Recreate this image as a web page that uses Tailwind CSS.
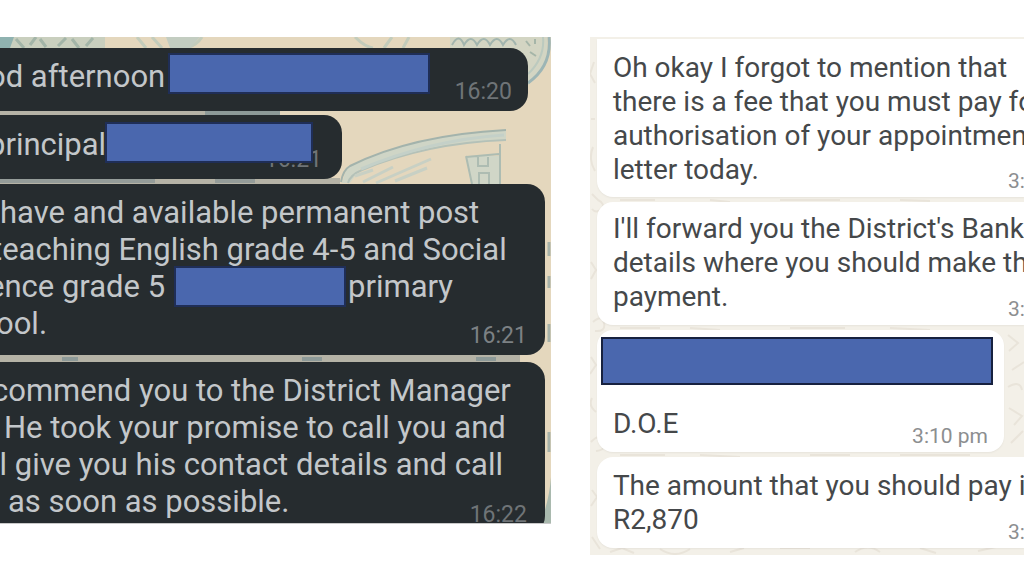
<!DOCTYPE html>
<html lang="en">
<head>
    <meta charset="UTF-8">
    <meta name="viewport" content="width=device-width, initial-scale=1.0">
    <title>Chat messages</title>
    <script src="https://cdn.jsdelivr.net/npm/@tailwindcss/browser@4"></script>
</head>
<body class="bg-white font-['Roboto',sans-serif] overflow-x-hidden">
    <main class="flex items-start pt-[37px] pb-5">
        <!-- Dark chat -->
        <section class="relative w-[53.8%] h-[487px] shrink-0 overflow-hidden bg-[#e4d7bd] border-b border-[#c9c9c9] text-[31px] leading-[37px] text-[#c3c7ca] whitespace-nowrap">
            <svg class="absolute top-0 left-0" width="551" height="487" viewBox="0 0 551 487" fill="none" aria-hidden="true">
                <!-- top strip -->
                <path d="M0 0H105V11H0Z" fill="#c9cfbe"/>
                <path d="M0 0H14L10 11H0Z" fill="#8fb2b0"/>
                <path d="M16 2l8 9M30 8l6-8M40 2l6 8M58 9l8-8M72 2l7 9M86 9l7-8" stroke="#a3b5a8" stroke-width="3"/>
                <path d="M137 0l9 11M152 0l10 11M202 0q-5 8-15 11M355 0q10 10 18 11M409 0l-6 11M392 0l-8 11" stroke="#c3ccbb" stroke-width="3"/>
                <path d="M166 0H200L190 11H170Z" fill="#c3cdc1"/>
                <!-- round doodle in the corner -->
                <path d="M450 0H547Q550 30 528 48L520 20L450 11Z" fill="#d3d5c3"/>
                <path d="M549 0Q552 29 528 46" stroke="#9db5b5" stroke-width="3"/>
                <path d="M543 0Q545 21 528 37" stroke="#bccabf" stroke-width="2"/>
                <path d="M452 8q7-13 12 0q7-12 13 0q7-12 13 0q7-12 13 0q7-12 13 0" stroke="#a2b5ae" stroke-width="2"/>
                <path d="M526 4l4 5m5-7v5m-5 8l6 4" stroke="#a5b5a8" stroke-width="2"/>
                <!-- boat doodle -->
                <path d="M342 146L347 130Q412 98 506 93V103Q426 107 360 132L350 146Z" fill="#cfd5c6"/>
                <path d="M341 145Q343 133 350 129Q412 98 506 93" stroke="#a3b3ac" stroke-width="2"/>
                <path d="M348 146Q350 138 362 133Q426 106 506 103" stroke="#b4c1b8" stroke-width="2"/>
                <path d="M361 132Q430 103 504 98" stroke="#c4d0c8" stroke-width="3"/>
                <path d="M363 145l30-15m-17 16l55-24m-36 22l32-13M355 139l18-6" stroke="#c8d0c4" stroke-width="3"/>
                <path d="M466 119h33v28h-28Z" fill="#d0d6c7"/>
                <path d="M466 119l6 28M466 120l33-3M500 107v40M478 120v9h10v-9M479 147v-11h10v11" stroke="#adbcb2" stroke-width="2"/>
                <!-- strips between the bubbles -->
                <path d="M0 74H205V79H0ZM0 141H340V147H0ZM0 318H520V325H0Z" fill="#b5b3a6"/>
                <path d="M205 76h75M62 322h16M302 322h20M476 322h20" stroke="#8d9a98" stroke-width="4"/>
                <path d="M0 144h155m60 0h40" stroke="#949c99" stroke-width="4"/>
                <path d="M549 205v14m0 20v12m0 36v18m0 90v20" stroke="#a5b1a8" stroke-width="3"/>
                <path d="M540 487Q549 465 551 440V487Z" fill="#a9b9ae"/>
            </svg>

            <div class="relative flex flex-col items-start pt-[11px]">
                <div class="relative self-stretch mr-[23px] h-[63px] pt-[10px] bg-[#262c2f] rounded-r-[18px]">
                    <p class="-ml-3">od afternoon</p>
                    <div class="absolute top-[5px] left-[168px] w-[262px] h-[41px] bg-[#4a67ae] border-2 border-[#1f2e57]"></div>
                    <time class="absolute right-4 bottom-1 text-[23px] leading-[30px] text-[#6f7477]">16:20</time>
                </div>

                <div class="relative mt-1 w-[342px] h-[64px] pt-[11px] bg-[#262c2f] rounded-r-[18px]">
                    <p class="-ml-3">principal</p>
                    <time class="absolute right-5 bottom-1 text-[23px] leading-[30px] text-[#6f7477]">16:21</time>
                    <div class="absolute top-[7px] left-[105px] w-[208px] h-[41px] bg-[#4a67ae] border-2 border-[#1f2e57]"></div>
                </div>

                <div class="relative mt-[5px] self-stretch mr-[6px] h-[171px] pt-[10px] bg-[#262c2f] rounded-r-[18px]">
                    <p>have and available permanent post</p>
                    <p class="-ml-2">teaching English grade 4-5 and Social</p>
                    <p class="-ml-3 flex">
                        <span class="w-[360px]">ence grade 5</span>
                        <span>primary</span>
                    </p>
                    <p class="-ml-1">ool.</p>
                    <div class="absolute top-[82px] left-[174px] w-[172px] h-[41px] bg-[#4a67ae] border-2 border-[#1f2e57]"></div>
                    <time class="absolute right-[18px] bottom-1 text-[23px] leading-[30px] text-[#7c8184]">16:21</time>
                </div>

                <div class="relative mt-[7px] self-stretch mr-[6px] h-[172px] pt-[10px] bg-[#262c2f] rounded-r-[18px]">
                    <p class="-ml-2">commend you to the District Manager</p>
                    <p class="ml-1">He took your promise to call you and</p>
                    <p class="-ml-2">ll give you his contact details and call</p>
                    <p class="ml-2">as soon as possible.</p>
                    <time class="absolute right-[18px] bottom-1 text-[23px] leading-[30px] text-[#6f7477]">16:22</time>
                </div>
            </div>
        </section>

        <!-- Light chat -->
        <section class="relative ml-[39px] flex-1 min-w-0 overflow-hidden bg-[#f3f0e8] pb-[7px] text-[28px] leading-[34px] text-[#45484a] whitespace-nowrap">
            <svg class="absolute top-0 left-0" width="434" height="518" viewBox="0 0 434 518" fill="none" stroke="#e9e4da" stroke-width="2" aria-hidden="true">
                <path d="M4 25l-4 12 5 9M1 82h4M3 110q-5 12 2 24M2 157l6 6q8 4 3 9t-9 0M1 225l5 8-5 9M3 285q9-8 11 1t-9 8M1 320l5 8-6 9M2 361q-4 8 4 14M1 405q10-10 13-1t-8 10M2 453l5 7-6 9M2 500l8 12M20 515l12-4 12 5M70 512q15 10 30 0M140 515l14-4M190 511h30M265 515q13-9 25 0M330 511l16 5M388 514l18-4"/>
                <path d="M418 298l10 8-9 8M422 333l12-8M418 350q12-7 14 3M419 371l13 8-8 9M433 394l-12 12"/>
                <path d="M30 163h35M120 163l20 2M190 163h60M310 163l30 1M30 291h40M100 291l30 2M200 291h55M300 291l40 2M30 418h45M110 418l40 2M220 418h40M310 418h70"/>
            </svg>

            <div class="relative flex flex-col gap-[5px] pl-[7px] pt-[2px]">
                <div class="relative h-[158px] pt-3 pl-4 bg-white rounded-bl-[16px] shadow-xs">
                    <p>Oh okay I forgot to mention that</p>
                    <p>there is a fee that you must pay for</p>
                    <p>authorisation of your appointment</p>
                    <p>letter today.</p>
                    <time class="absolute right-0 bottom-1 w-4 text-[21px] leading-6 text-[#8c8e90]">3:</time>
                </div>

                <div class="relative h-[123px] pt-[10px] pl-4 bg-white rounded-l-[16px] shadow-xs">
                    <p>I'll forward you the District's Bank</p>
                    <p>details where you should make the</p>
                    <p>payment.</p>
                    <time class="absolute right-0 bottom-1 w-4 text-[21px] leading-6 text-[#8c8e90]">3:</time>
                </div>

                <div class="relative h-[122px] mr-5 pt-[7px] pl-1 pr-[11px] bg-white rounded-[16px] shadow-xs">
                    <div class="h-[48px] bg-[#4a67ae] border-2 border-[#17213f]"></div>
                    <p class="pt-[22px] pl-3">D.O.E</p>
                    <time class="absolute right-4 bottom-1 text-[21px] leading-6 text-[#8c8e90]">3:10 pm</time>
                </div>

                <div class="relative h-[91px] pt-3 pl-4 bg-white rounded-l-[16px] shadow-xs">
                    <p>The amount that you should pay is</p>
                    <p>R2,870</p>
                    <time class="absolute right-0 bottom-1 w-4 text-[21px] leading-6 text-[#8c8e90]">3:</time>
                </div>
            </div>
        </section>
    </main>
</body>
</html>
